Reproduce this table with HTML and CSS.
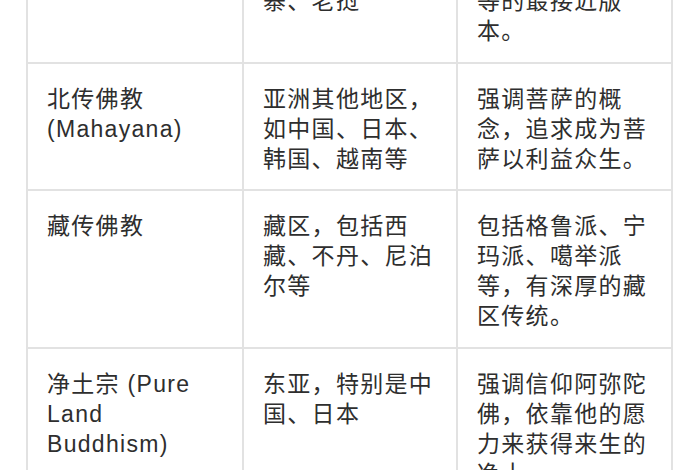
FILE: index.html
```html
<!DOCTYPE html>
<html lang="zh-CN">
<head>
<meta charset="utf-8">
<title>佛教派别</title>
<link rel="stylesheet" href="styles.css">
</head>
<body>
<div class="page">
  <table class="sects">
    <colgroup>
      <col class="c1"><col class="c2"><col class="c3">
    </colgroup>
    <tbody>
      <tr>
        <td>南传佛教 (Theravada)</td>
        <td>南亚和东南亚，如斯里兰卡、缅甸、泰国、柬埔寨、老挝</td>
        <td>保存了巴利语三藏经典，是佛陀原始教导和戒律等的最接近版本。</td>
      </tr>
      <tr>
        <td>北传佛教 (Mahayana)</td>
        <td>亚洲其他地区，如中国、日本、韩国、越南等</td>
        <td>强调菩萨的概念，追求成为菩萨以利益众生。</td>
      </tr>
      <tr>
        <td>藏传佛教</td>
        <td>藏区，包括西藏、不丹、尼泊尔等</td>
        <td>包括格鲁派、宁玛派、噶举派等，有深厚的藏区传统。</td>
      </tr>
      <tr>
        <td>净土宗 (Pure Land Buddhism)</td>
        <td>东亚，特别是中国、日本</td>
        <td>强调信仰阿弥陀佛，依靠他的愿力来获得来生的净土。</td>
      </tr>
    </tbody>
  </table>
</div>
</body>
</html>
```
FILE: styles.css
```css
html, body {
  margin: 0;
  padding: 0;
  background: #ffffff;
}
body {
  width: 700px;
  height: 470px;
  overflow: hidden;
}
.page {
  padding-left: 26px;
  margin-top: -126px;
}
.sects {
  border-collapse: collapse;
  table-layout: fixed;
  width: 647px;
  font-family: "Liberation Sans", "Noto Sans CJK SC", sans-serif;
  font-size: 23px;
  letter-spacing: 1.3px;
  line-height: 30px;
  color: #2e2e2e;
}
.c1 { width: 216px; }
.c2 { width: 214px; }
.c3 { width: 215px; }
.sects td {
  border: 2px solid #e2e2e2;
  padding: 20px 19px 15.5px 19px;
  vertical-align: top;
  word-break: normal;
}
```
